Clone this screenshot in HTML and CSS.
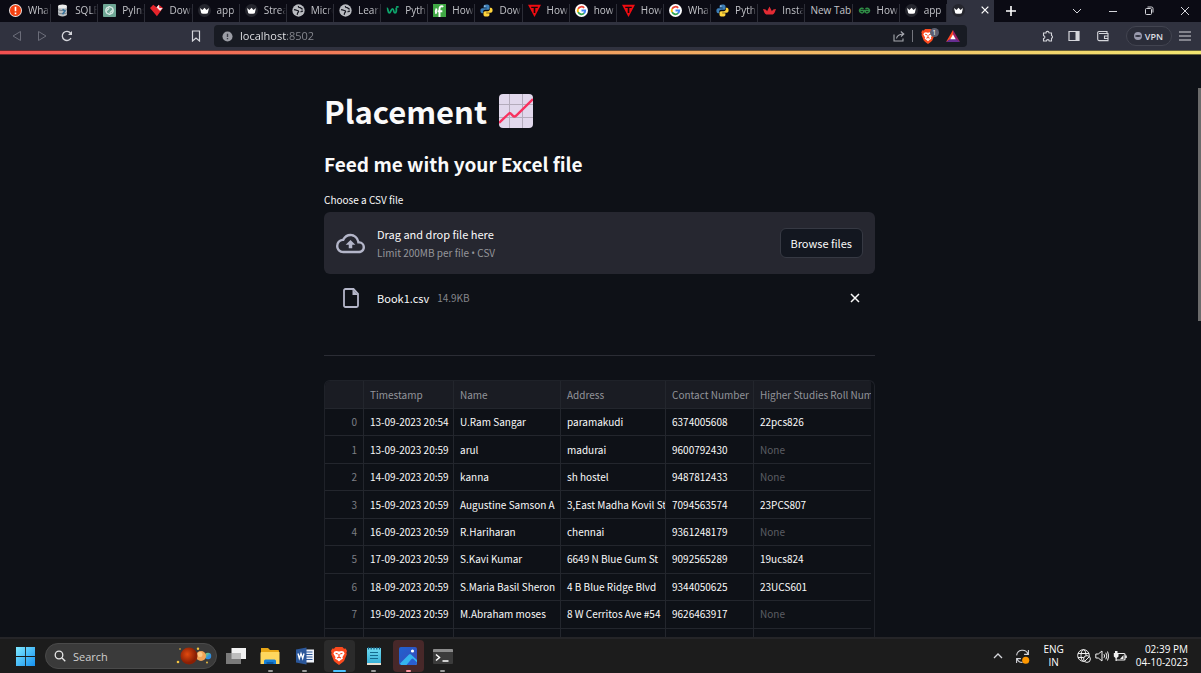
FILE: index.html
```html
<!DOCTYPE html>
<html lang="en">
<head>
<meta charset="utf-8">
<meta name="viewport" content="width=device-width, initial-scale=1">
<title>app</title>
<link rel="stylesheet" href="styles.css">
</head>
<body>
<svg class="defs" aria-hidden="true">
  <defs>
    <linearGradient id="win" x1="0" y1="0" x2="1" y2="1"><stop offset="0" stop-color="#7fe9ff"/><stop offset="1" stop-color="#1590f0"/></linearGradient>
    <linearGradient id="photo" x1="0" y1="0" x2="1" y2="1"><stop offset="0" stop-color="#1f62d0"/><stop offset="1" stop-color="#3b49b8"/></linearGradient>
    <linearGradient id="note" x1="0" y1="0" x2="0" y2="1"><stop offset="0" stop-color="#6fdcf2"/><stop offset="1" stop-color="#35aed6"/></linearGradient>
    <radialGradient id="mars" cx=".4" cy=".4"><stop offset="0" stop-color="#e04a10"/><stop offset="1" stop-color="#8a1f04"/></radialGradient>
    <linearGradient id="earth" x1="0" y1="0" x2="1" y2="1"><stop offset="0" stop-color="#8be05a"/><stop offset=".6" stop-color="#2f8ee0"/></linearGradient>
  </defs>
  <symbol id="i-crown" viewBox="0 0 16 16"><circle cx="8" cy="8" r="8" fill="#25262e"/><path d="M2.500 5 5.500 7.500 8 4.500 10.500 7.500 13.500 5 12 11.300 Q8 12.600 4 11.300Z" fill="#fff"/></symbol>
  <symbol id="i-globe" viewBox="0 0 16 16"><circle cx="8" cy="8" r="7.600" fill="#b9bbc0"/><path d="M2.500 6.800c3 .2 3 1.200 4.500 1.400 1.500.4 1.500 1.500.4 2.200-1 .8-.7 1.800-1 3M8 2.500c-.5 1.500.6 2 2 2 1.200.1 1.200 1.400 3.200 1.700M13.500 9c-1.500-.5-2.500 0-2.500 1" fill="none" stroke="#15161f" stroke-width="1.500"/></symbol>
  <symbol id="i-google" viewBox="0 0 16 16"><circle cx="8" cy="8" r="8" fill="#fff"/><g fill="none" stroke-width="2.200"><path d="M11.300 4.700A4.600 4.600 0 0 0 3.900 6" stroke="#ea4335"/><path d="M3.900 5.900a4.600 4.600 0 0 0 0 4.200" stroke="#fbbc05"/><path d="M3.900 10.100a4.600 4.600 0 0 0 7.400 1.200" stroke="#34a853"/><path d="M8 8h4.600a4.600 4.600 0 0 1-1.500 3.500" stroke="#4285f4"/></g></symbol>
  <symbol id="i-python" viewBox="0 0 16 16"><path d="M8 .5c-3 0-3.600 1-3.600 2.300V4.500h4v.8H2.800C1.200 5.300.5 6.600.5 8.300s.8 3 2 3h1.400V9.400c0-1.200 1-2.200 2.300-2.200h3.600c1 0 1.900-.9 1.900-1.900V2.800C11.700 1.300 10.500.5 8 .5Z" fill="#3d7fb8"/><path d="M8 15.500c3 0 3.600-1 3.600-2.300v-1.700h-4v-.8h5.600c1.600 0 2.300-1.300 2.300-3s-.8-3-2-3h-1.400v1.900c0 1.200-1 2.200-2.300 2.200H6.200c-1 0-1.900.9-1.900 1.900v2.500c0 1.500 1.200 2.300 3.700 2.300Z" fill="#ffd43b"/><circle cx="6" cy="2.500" r=".8" fill="#fff"/></symbol>
  <symbol id="i-t" viewBox="0 0 16 16"><path d="M0 1h16L8 16Z" fill="#f00c12"/><path d="M4 3.300h8v1.700H9v6H7v-6H4Z" fill="#170609"/></symbol>
  <symbol id="i-brave" viewBox="0 0 16 18"><path d="M4.500 0h7l1.500 1.700 1.700-.1L16 4l-.6 1.800.4 1.500-2.500 6.200c-.5 1.200-3 2.800-5.300 4.500-2.300-1.700-4.800-3.300-5.300-4.500L.2 7.300l.4-1.500L0 4l1.300-2.400 1.700.1Z" fill="#fb4a1e"/><path d="M3.400 4.400 5.500 4l2.500.5L10.500 4l2.100.4 1 2.200-2.200 3.600.6 1.400-2.300 1.500L8 14.600l-1.700-1.500L4 11.600l.6-1.400-2.200-3.600Z" fill="#fff"/><path d="M4.600 6.300 6.800 7M11.400 6.300 9.200 7M8 7v3.600M6 11l2-.8 2 .8" stroke="#fb4a1e" stroke-width="1.200" fill="none"/></symbol>
  <symbol id="i-x" viewBox="0 0 12 12"><path d="M2 2l8 8M10 2l-8 8" stroke="currentColor" stroke-width="1.500" fill="none"/></symbol>
</svg>

<header class="browser">
  <div class="tabstrip">
    <div class="tabs" role="tablist">
      <button class="tab" role="tab"><svg class="fav" viewBox="0 0 16 16"><circle cx="8" cy="8" r="8" fill="#f2e9e6"/><circle cx="8" cy="8" r="6.800" fill="#f4400f"/><path d="M8 3.500v5.300M8 10.500v2" stroke="#fff" stroke-width="2"/></svg><span class="tab-text">What</span></button>
      <button class="tab" role="tab"><svg class="fav" viewBox="0 0 16 16"><path d="M2.500 3v10c0 3 11 3 11 0V3" fill="#bcc1c4"/><ellipse cx="8" cy="3" rx="5.500" ry="2.400" fill="#ecedec"/><path d="M2.500 6.500c1 2 10 2 11 0M2.500 10.500c1 2 10 2 11 0" stroke="#6b737a" fill="none"/><path d="m8 6.500 3 2-3 4" stroke="#38749d" stroke-width="2" fill="none"/></svg><span class="tab-text">SQLE</span></button>
      <button class="tab" role="tab"><svg class="fav" viewBox="0 0 16 16"><rect width="16" height="16" rx="1" fill="#6ea795"/><g fill="none" stroke="#e6f2ee" stroke-width="1"><circle cx="8" cy="8" r="4.800"/><path d="m8 3.200 4.200 2.400v4.800L8 12.800l-4.200-2.400V5.600ZM5 8l3-5M11 8l-3 5M8 5.500 3.800 9M8 10.500 12.200 7"/></g></svg><span class="tab-text">PyIns</span></button>
      <button class="tab" role="tab"><svg class="fav" viewBox="0 0 16 16"><path d="M0 5 4 1l4 3 3-3 5 4L8.500 15Z" fill="#e5242b"/><path d="m8 4 3-3 .5 4 4 0L12.500 8.500 10 6Z" fill="#f6e4e5"/></svg><span class="tab-text">Down</span></button>
      <button class="tab" role="tab"><svg class="fav"><use href="#i-crown"/></svg><span class="tab-text">app</span></button>
      <button class="tab" role="tab"><svg class="fav"><use href="#i-crown"/></svg><span class="tab-text">Strea</span></button>
      <button class="tab" role="tab"><svg class="fav"><use href="#i-globe"/></svg><span class="tab-text">Micro</span></button>
      <button class="tab" role="tab"><svg class="fav"><use href="#i-globe"/></svg><span class="tab-text">Learn</span></button>
      <button class="tab" role="tab"><svg class="fav" viewBox="0 0 16 16"><path d="M1 5c2 0 1 6 3 6s2-5 4-5 1 5 3 5 2-4 1.500-6.500M12.500 3.500h3" fill="none" stroke="#0ea56c" stroke-width="2.200"/></svg><span class="tab-text">Pyth</span></button>
      <button class="tab" role="tab"><svg class="fav" viewBox="0 0 16 16"><rect width="16" height="16" fill="#3fa744"/><path d="M8 16V6c0-3 3-4 4.500-2.500M5.500 9h6M4.500 5.500C3 8 3 10 4 12" fill="none" stroke="#fff" stroke-width="2.400"/></svg><span class="tab-text">How</span></button>
      <button class="tab" role="tab"><svg class="fav"><use href="#i-python"/></svg><span class="tab-text">Dow</span></button>
      <button class="tab" role="tab"><svg class="fav"><use href="#i-t"/></svg><span class="tab-text">How</span></button>
      <button class="tab" role="tab"><svg class="fav"><use href="#i-google"/></svg><span class="tab-text">how</span></button>
      <button class="tab" role="tab"><svg class="fav"><use href="#i-t"/></svg><span class="tab-text">How</span></button>
      <button class="tab" role="tab"><svg class="fav"><use href="#i-google"/></svg><span class="tab-text">What</span></button>
      <button class="tab" role="tab"><svg class="fav"><use href="#i-python"/></svg><span class="tab-text">Pyth</span></button>
      <button class="tab" role="tab"><svg class="fav" viewBox="0 0 16 16"><path d="M0 6c3 0 4 1 5 3L8 3l3 6c1-2 2-3 5-3-1 3-2 6-4 7H4C2 12 1 9 0 6Z" fill="#e22b34"/></svg><span class="tab-text">Insta</span></button>
      <button class="tab" role="tab"><span class="tab-text">New Tab</span></button>
      <button class="tab" role="tab"><svg class="fav" viewBox="0 0 16 16"><path d="M1 8h14M6.800 6a2.900 2.900 0 1 0 .2 4V8M9.200 6a2.900 2.900 0 1 1-.2 4V8" fill="none" stroke="#2f8d46" stroke-width="1.700"/></svg><span class="tab-text">How</span></button>
      <button class="tab" role="tab"><svg class="fav"><use href="#i-crown"/></svg><span class="tab-text">app</span></button>
      <button class="tab active" role="tab" aria-selected="true" aria-label="app"><svg class="fav"><use href="#i-crown"/></svg><svg class="tab-close"><use href="#i-x"/></svg></button>
    </div>
    <button class="icon-btn new-tab" aria-label="New tab"><svg viewBox="0 0 12 12"><path d="M6 1v10M1 6h10" stroke="#fff" stroke-width="1.600"/></svg></button>
    <div class="window-controls">
      <button class="icon-btn" aria-label="Tab search"><svg viewBox="0 0 12 12"><path d="m2 4 4 4 4-4" fill="none" stroke="currentColor"/></svg></button>
      <button class="icon-btn" aria-label="Minimize"><svg viewBox="0 0 12 12"><path d="M2 6.500h8" stroke="currentColor"/></svg></button>
      <button class="icon-btn" aria-label="Restore"><svg viewBox="0 0 12 12"><path d="M2.500 4.500a1 1 0 0 1 1-1h4a1 1 0 0 1 1 1v4a1 1 0 0 1-1 1h-4a1 1 0 0 1-1-1ZM4.500 2h4a1.500 1.500 0 0 1 1.500 1.500v4" fill="none" stroke="currentColor"/></svg></button>
      <button class="icon-btn" aria-label="Close"><svg viewBox="0 0 12 12"><path d="m2 2 8 8M10 2l-8 8" stroke="currentColor"/></svg></button>
    </div>
  </div>

  <div class="toolbar">
    <div class="nav">
      <button class="icon-btn dim" aria-label="Back"><svg viewBox="0 0 12 12"><path d="M9.500 1.500v9L2 6Z" fill="none" stroke="currentColor"/></svg></button>
      <button class="icon-btn dim" aria-label="Forward"><svg viewBox="0 0 12 12"><path d="M2.500 1.500v9L10 6Z" fill="none" stroke="currentColor"/></svg></button>
      <button class="icon-btn" aria-label="Reload"><svg viewBox="0 0 12 12"><path d="M10 8a4.600 4.600 0 1 1-.5-5" fill="none" stroke="currentColor" stroke-width="1.300"/><path d="M11 1v4H7Z" fill="currentColor"/></svg></button>
      <button class="icon-btn bookmark" aria-label="Bookmark"><svg viewBox="0 0 12 12"><path d="M2.500 1h7v10L6 8l-3.500 3Z" fill="none" stroke="currentColor" stroke-width="1.200"/></svg></button>
    </div>
    <div class="omnibox">
      <svg class="site-info" viewBox="0 0 12 12"><circle cx="6" cy="6" r="5.500" fill="#9b9da5"/><path d="M6 3v3.500M6 7.600V9" stroke="#3a3c46" stroke-width="1.500"/></svg>
      <input class="address" type="text" value="localhost:8502" aria-label="Address">
      <button class="icon-btn" aria-label="Share"><svg viewBox="0 0 12 12"><path d="M1 4.500V11h9V8.500M3.500 8.500c.5-3 2-4.200 6.500-4.500M7.800 1.500 10.800 4 8 6.500" fill="none" stroke="#a7a9b0" stroke-width="1.100"/></svg></button>
      <span class="divider"></span>
      <button class="icon-btn shield" aria-label="Brave Shields"><svg><use href="#i-brave"/></svg><span class="badge">1</span></button>
      <button class="icon-btn bat" aria-label="Rewards"><svg viewBox="0 0 14 12"><path d="M7 0 0 12l7-4Z" fill="#ff4724"/><path d="m7 0 7 12-7-4Z" fill="#9e1f63"/><path d="M0 12h14L7 7Z" fill="#662d91"/><path d="m7 4.500 2.700 4.700H4.300Z" fill="#fff"/></svg></button>
    </div>
    <div class="tools">
      <button class="icon-btn" aria-label="Extensions"><svg viewBox="0 0 12 12"><path d="M1.500 3H4a1.500 1.500 0 0 1 3-.2L9.500 3v2.500a1.500 1.500 0 0 1 0 2.800V11H7.200a1.400 1.400 0 0 0-2.800 0H1.500V8.500a1.400 1.400 0 0 0 0-2.800Z" fill="none" stroke="currentColor" stroke-width="1.100"/></svg></button>
      <button class="icon-btn" aria-label="Sidebar"><svg viewBox="0 0 12 12"><path d="M1 1.500h10v9H1Z" fill="none" stroke="currentColor" stroke-width="1.200"/><path d="M7.500 1.500H11v9H7.500Z" fill="currentColor"/></svg></button>
      <button class="icon-btn" aria-label="Wallet"><svg viewBox="0 0 12 12"><path d="M10 3.500v-2H2A1.300 1.300 0 0 0 .7 2.800v6.500A1.400 1.400 0 0 0 2 10.600h9V3.500H2M11 6H7.500v2.500H11" fill="none" stroke="currentColor" stroke-width="1.100"/></svg></button>
      <button class="vpn"><span class="vpn-dot"></span>VPN</button>
      <button class="icon-btn" aria-label="Menu"><svg viewBox="0 0 12 12"><path d="M0 2h12M0 6h12M0 10h12" stroke="currentColor" stroke-width="1.200"/></svg></button>
    </div>
  </div>
</header>

<main class="app">
  <div class="scroll-thumb"></div>
  <div class="content">
    <h1 class="title">Placement
      <svg class="chart" viewBox="0 0 34 34" role="img" aria-label="chart increasing"><rect width="34" height="34" rx="4" fill="#e1d8ec"/><path d="M10.500 0v34M23.500 0v34M0 10.500h34M0 23.500h34" stroke="#b4acbc" stroke-width="1"/><path d="m0 29 10-9.500c.8-.8 1.500-.4 2 .3l2 2c1 1 2 .8 3 0L34 5" fill="none" stroke="#f8315f" stroke-width="2.400"/></svg>
    </h1>
    <h2 class="subtitle">Feed me with your Excel file</h2>
    <label class="field-label" for="browse">Choose a CSV file</label>
    <section class="dropzone">
      <svg class="cloud" viewBox="0 0 24 24"><path d="M19.350 10.040A7.490 7.490 0 0 0 12 4C9.110 4 6.600 5.640 5.350 8.040A5.994 5.994 0 0 0 0 14c0 3.310 2.690 6 6 6h13c2.760 0 5-2.240 5-5 0-2.640-2.050-4.780-4.650-4.960ZM19 18H6c-2.210 0-4-1.790-4-4 0-2.050 1.530-3.760 3.560-3.970l1.070-.11.500-.95A5.469 5.469 0 0 1 12 6c2.620 0 4.880 1.860 5.390 4.430l.3 1.500 1.530.11A2.980 2.980 0 0 1 22 15c0 1.650-1.350 3-3 3ZM8 13h2.550v3h2.900v-3H16l-4-4Z" fill="currentColor"/></svg>
      <div class="drop-text">
        <span class="drop-main">Drag and drop file here</span>
        <small class="drop-hint">Limit 200MB per file <span class="bullet">•</span> CSV</small>
      </div>
      <button class="browse" id="browse">Browse files</button>
    </section>
    <div class="file">
      <svg class="file-icon" viewBox="0 0 16 20"><path d="M2.500 1h8L15 5.800v11.700A1.500 1.500 0 0 1 13.500 19h-11A1.500 1.500 0 0 1 1 17.500v-15A1.500 1.500 0 0 1 2.500 1Z" fill="none" stroke="currentColor" stroke-width="1.800"/><path d="M9.500 1v6H15" fill="currentColor"/></svg>
      <span class="file-name">Book1.csv</span>
      <small class="file-size">14.9KB</small>
      <button class="icon-btn remove" aria-label="Remove file"><svg><use href="#i-x"/></svg></button>
    </div>
    <hr class="rule">
    <div class="frame">
      <table class="grid">
        <colgroup><col class="c-index"><col class="c-time"><col class="c-name"><col class="c-address"><col class="c-phone"><col class="c-roll"></colgroup>
        <thead><tr><th></th><th>Timestamp</th><th>Name</th><th>Address</th><th>Contact Number</th><th>Higher Studies Roll Number</th></tr></thead>
        <tbody>
          <tr><td>0</td><td>13-09-2023 20:54</td><td>U.Ram Sangar</td><td>paramakudi</td><td>6374005608</td><td>22pcs826</td></tr>
          <tr><td>1</td><td>13-09-2023 20:59</td><td>arul</td><td>madurai</td><td>9600792430</td><td class="none">None</td></tr>
          <tr><td>2</td><td>14-09-2023 20:59</td><td>kanna</td><td>sh hostel</td><td>9487812433</td><td class="none">None</td></tr>
          <tr><td>3</td><td>15-09-2023 20:59</td><td>Augustine Samson A</td><td>3,East Madha Kovil St</td><td>7094563574</td><td>23PCS807</td></tr>
          <tr><td>4</td><td>16-09-2023 20:59</td><td>R.Hariharan</td><td>chennai</td><td>9361248179</td><td class="none">None</td></tr>
          <tr><td>5</td><td>17-09-2023 20:59</td><td>S.Kavi Kumar</td><td>6649 N Blue Gum St</td><td>9092565289</td><td>19ucs824</td></tr>
          <tr><td>6</td><td>18-09-2023 20:59</td><td>S.Maria Basil Sheron</td><td>4 B Blue Ridge Blvd</td><td>9344050625</td><td>23UCS601</td></tr>
          <tr><td>7</td><td>19-09-2023 20:59</td><td>M.Abraham moses</td><td>8 W Cerritos Ave #54</td><td>9626463917</td><td class="none">None</td></tr>
          <tr><td>&nbsp;</td><td>&nbsp;</td><td>&nbsp;</td><td>&nbsp;</td><td>&nbsp;</td><td>&nbsp;</td></tr>
        </tbody>
      </table>
    </div>
  </div>
</main>

<footer class="taskbar">
  <button class="icon-btn start" aria-label="Start"><svg viewBox="0 0 18 18"><path d="M0 0h8.600v8.600H0ZM9.400 0H18v8.600H9.400ZM0 9.400h8.600V18H0ZM9.400 9.400H18V18H9.400Z" fill="url(#win)"/></svg></button>
  <div class="search">
    <svg class="lens" viewBox="0 0 12 12"><circle cx="5" cy="5" r="3.800" fill="none" stroke="#e8e8e8" stroke-width="1.300"/><path d="m8 8 3.300 3.300" stroke="#e8e8e8" stroke-width="1.300"/></svg>
    <input class="search-input" type="text" placeholder="Search" aria-label="Search">
    <svg class="planets" viewBox="0 0 36 18"><circle cx="32" cy="9" r="3.200" fill="url(#earth)"/><circle cx="25" cy="9" r="5" fill="#f2a356"/><circle cx="24" cy="7.500" r="2.500" fill="#f9c987"/><circle cx="13" cy="9" r="8.500" fill="url(#mars)"/><g fill="#f5c542"><circle cx="22" cy="1.800" r="1.200"/><circle cx="2" cy="15" r="1.300"/><circle cx="4" cy="2" r=".8"/><circle cx="31" cy="15.500" r=".9"/></g></svg>
  </div>
  <div class="apps">
    <button class="tile" aria-label="Task view"><svg viewBox="0 0 20 18"><path d="M5.500 1H20v11H5.500Z" fill="#f2f2f2"/><path d="M0 6h15v11H0Z" fill="#7a7a7a"/><path d="M5.500 6H15v6H5.500Z" fill="#bdbdbd"/></svg></button>
    <button class="tile running" aria-label="File Explorer"><svg viewBox="0 0 20 18"><path d="M1 1h7l2 2h8a1 1 0 0 1 1 1v4H1Z" fill="#e8a616"/><path d="M1 5h18.500v12H.5V6Z" fill="#ffd75e"/><path d="M4 17v-3a1.500 1.500 0 0 1 1.500-1.500h9A1.500 1.500 0 0 1 16 14v3Z" fill="#1881d8"/><path d="M6.500 15h7v2h-7Z" fill="#0b5ba8"/></svg></button>
    <button class="tile running" aria-label="Word"><svg viewBox="0 0 20 18"><path d="M9 2.500h10v13H9Z" fill="#eef2fa"/><path d="M11 5h6.500M11 7.500h6.500M11 10h6.500M11 12.500h6.500" stroke="#2b579a"/><path d="M1 2.500 11.500.500v17L1 15.500Z" fill="#2b579a"/><path d="m3 6.500 1.300 5 1.700-5 1.700 5 1.300-5" fill="none" stroke="#fff" stroke-width="1.300"/></svg></button>
    <button class="tile running current" aria-label="Brave"><svg><use href="#i-brave"/></svg></button>
    <button class="tile running" aria-label="Notepad"><svg viewBox="0 0 20 18"><path d="M3 1h14v16H3Z" fill="url(#note)"/><path d="M3 16h14v2H3Z" fill="#e9dfcf"/><path d="M4.500 0v2.500M7.200 0v2.500M10 0v2.500M12.800 0v2.500M15.500 0v2.500" stroke="#13577a" stroke-width="1.200"/><path d="M6 5.500h8M6 8.500h8M6 11.500h8" stroke="#146c8f" stroke-width="1.200"/></svg></button>
    <button class="tile running alert" aria-label="Photos"><svg viewBox="0 0 20 18"><rect x="1" y="0" width="18" height="18" rx="2" fill="url(#photo)"/><path d="m2 16.500 9-9a1.500 1.500 0 0 1 2 0L19 13v3a2 2 0 0 1-2 2H3Z" fill="#35b4ee"/><path d="m8.500 18 5-6a1.500 1.500 0 0 1 2 0L19 15.500v.5a2 2 0 0 1-2 2Z" fill="#2a5fd0"/><circle cx="14.500" cy="4" r="1.600" fill="#fff"/></svg></button>
    <button class="tile running" aria-label="Terminal"><svg viewBox="0 0 20 18"><rect x="0" y="2" width="20" height="15" rx="1" fill="#3b3b3b"/><path d="M0 5V3a1 1 0 0 1 1-1h18a1 1 0 0 1 1 1v2Z" fill="#8c8c8c"/><path d="m3 7.500 3.500 3L3 13.500M9.500 14h6" fill="none" stroke="#fff" stroke-width="1.500"/></svg></button>
  </div>
  <div class="tray">
    <button class="icon-btn" aria-label="Hidden icons"><svg viewBox="0 0 12 12"><path d="m2 8 4-4 4 4" fill="none" stroke="currentColor" stroke-width="1.300"/></svg></button>
    <button class="icon-btn update" aria-label="Update"><svg viewBox="0 0 14 14"><path d="M1.500 6A5.500 5.500 0 0 1 12 4.500M12.500 1v4h-4M1.500 13V9h4M2 9.500A5.500 5.500 0 0 0 7 12.500" fill="none" stroke="currentColor"/><circle cx="10" cy="10.500" r="3.300" fill="#ff9800"/></svg></button>
    <div class="stack lang"><span>ENG</span><span>IN</span></div>
    <div class="status">
      <svg viewBox="0 0 14 14"><g fill="none" stroke="currentColor" stroke-width="1"><circle cx="6.500" cy="6.500" r="5.800"/><ellipse cx="6.500" cy="6.500" rx="2.500" ry="5.800"/><path d="M1 4.500h11M1 8.500h6"/></g><circle cx="10" cy="10" r="3.400" fill="#1c1c1c" stroke="currentColor"/><path d="m7.800 12.200 4.400-4.400" stroke="currentColor"/></svg>
      <svg viewBox="0 0 14 14"><path d="M.8 5v4h2.500L7 12V2L3.300 5ZM9 5.200q1.200 1.800 0 3.600M10.800 3.700q2.200 3.300 0 6.600M12.500 2.500q2.500 4.500 0 9" fill="none" stroke="currentColor"/></svg>
      <svg viewBox="0 0 14 14"><path d="M2 4.500h9a1 1 0 0 1 1 1V10a1 1 0 0 1-1 1H3.500" fill="none" stroke="currentColor" stroke-width="1.200"/><path d="M13 6.500v2.500" stroke="currentColor" stroke-width="1.600"/><path d="M2 2v2H.8v3.500L2.500 9v3h1.300V9l1.700-1.500V4H4.500V2M7 10l3.500-4v4Z" fill="currentColor"/></svg>
    </div>
    <div class="stack clock"><time>02:39 PM</time><time>04-10-2023</time></div>
  </div>
</footer>
</body>
</html>
```
FILE: styles.css
```css
* { box-sizing: border-box; }

body {
  margin: 0;
  height: 100vh;
  display: flex;
  flex-direction: column;
  overflow: hidden;
  background: #0e1117;
  color: #fafafa;
  font-family: "Noto Sans CJK SC", "Noto Sans", sans-serif;
}

button, input {
  margin: 0;
  padding: 0;
  border: 0;
  background: none;
  color: inherit;
  font: inherit;
}

svg { display: block; flex: none; }
.defs { position: absolute; width: 0; height: 0; }

.icon-btn {
  display: flex;
  align-items: center;
  justify-content: center;
  flex: none;
  width: 12px;
  height: 12px;
  color: #d5d6db;
}
.icon-btn svg { width: 100%; height: 100%; }

/* Browser chrome */
.browser {
  flex: none;
  font-family: "Open Sans", "Noto Sans", sans-serif;
  background: #30323f;
}
.browser::after {
  content: "";
  display: block;
  height: 3px;
  border: solid rgba(14, 17, 23, .6);
  border-width: 1px 0;
  background: linear-gradient(90deg, #f25050, #f0a060 50%, #f2e670) border-box;
}

.tabstrip {
  display: flex;
  align-items: center;
  height: 22px;
  padding: 0 10px 0 4px;
  background: #0b0b14;
}
.tabs { display: flex; flex: 0 1 990px; min-width: 0; height: 100%; }
.tab {
  position: relative;
  display: flex;
  align-items: center;
  gap: 6px;
  flex: 1 1 10px;
  min-width: 0;
  padding: 0 1px 2px 5px;
  font-size: 10px;
  line-height: 16px;
  color: #c3c4c9;
}
.tab:not(.active)::after {
  content: "";
  position: absolute;
  right: 0;
  top: 4px;
  bottom: 0;
  width: 1px;
  background: #2b2c36;
}
.fav { width: 13px; height: 13px; }
.tab-text {
  flex: 1;
  min-width: 0;
  overflow: hidden;
  white-space: nowrap;
  text-align: left;
  mask-image: linear-gradient(90deg, #000 70%, transparent);
}
.tab-text:first-child { mask-image: none; }
.tab.active { justify-content: space-between; padding-right: 4px; background: #30323f; color: #fff; }
.tab-close { width: 10px; height: 10px; }
.new-tab { margin-left: 11px; }
.window-controls { display: flex; gap: 24px; margin-left: auto; }

.toolbar { display: flex; align-items: center; height: 28px; padding: 0 10px; }
.nav { display: flex; align-items: center; gap: 13px; width: 204px; padding: 0 12px 0 1px; }
.dim { color: #6b6d79; }
.bookmark { margin-left: auto; }
.omnibox {
  display: flex;
  align-items: center;
  gap: 7px;
  flex: 1;
  height: 22px;
  padding: 0 7px 0 8px;
  border-radius: 4px;
  background: #181b23;
}
.site-info { width: 11px; height: 11px; }
.address {
  flex: 1;
  min-width: 0;
  font-size: 11px;
  line-height: 16px;
  color: transparent;
  background: linear-gradient(90deg, #eeeff2 46px, #8a8c93 46px) text;
}
.divider { width: 1px; height: 12px; background: #74767e; }
.shield { position: relative; width: 14px; height: 15px; margin-left: 1px; }
.badge {
  position: absolute;
  left: 9px;
  top: -1px;
  width: 9px;
  height: 9px;
  border-radius: 5px;
  background: #5d6070;
  color: #fff;
  font-size: 7px;
  line-height: 9px;
  text-align: center;
}
.bat { width: 14px; margin-left: 4px; }
.tools { display: flex; align-items: center; gap: 17px; margin-left: 75px; }
.tools > :first-child { margin-right: -3px; }
.vpn {
  display: flex;
  align-items: center;
  gap: 3px;
  height: 20px;
  margin-right: -10px;
  padding: 0 8px 0 7px;
  border: 1px solid #424450;
  border-radius: 10px;
  background: #2b2d39;
  font-size: 9px;
  font-weight: 600;
  color: #dddee2;
}
.vpn-dot { width: 8px; height: 8px; border: solid #9a9bae; border-width: 3px 1px; border-radius: 4px; background: #30323f; }

/* Page */
.app { position: relative; flex: 1; min-height: 0; overflow: hidden; padding: 33px 12px 0 10px; }
.scroll-thumb { position: absolute; right: 0; top: 33px; width: 3px; height: 233px; background: #6b6b6b; }
.content { max-width: 551px; margin: 0 auto; }

.title {
  display: flex;
  align-items: center;
  gap: 12px;
  margin: 0;
  font-size: 31px;
  font-weight: 700;
  line-height: 46px;
}
.chart { width: 34px; height: 34px; }
.subtitle { margin: 16px 0 0; font-size: 19px; font-weight: 700; line-height: 28px; }
.field-label { display: block; margin: 13px 0 4px; font-size: 10px; line-height: 17px; }

.dropzone {
  display: flex;
  align-items: center;
  gap: 12px;
  padding: 12px;
  border-radius: 6px;
  background: #262730;
}
.cloud { width: 29px; height: 29px; color: #b4b6c9; }
.drop-text { display: flex; flex-direction: column; flex: 1; }
.drop-main { font-size: 11px; line-height: 20px; }
.drop-hint { font-size: 10px; line-height: 18px; color: #95969b; }
.bullet { font-family: "Open Sans", sans-serif; line-height: 1; }
.browse {
  height: 30px;
  padding: 0 10px;
  border: 1px solid #363943;
  border-radius: 6px;
  background: #131720;
  font-size: 11px;
}

.file { display: flex; align-items: center; height: 24px; margin-top: 12px; padding: 0 14px 0 19px; }
.file-icon { width: 16px; height: 20px; margin-right: 18px; color: #b4b6c9; }
.file-name { font-size: 11px; line-height: 16px; }
.file-size { margin-left: 8px; font-size: 10px; line-height: 16px; color: #85868b; }
.remove { margin-left: auto; color: #fafafa; }

.rule { height: 1px; margin: 45px 0 24px; border: 0; background: #2b2d35; }

.frame { padding-right: 3px; border: 1px solid #1f2229; border-bottom: 0; border-radius: 6px 6px 0 0; overflow: hidden; }
.grid {
  width: 100%;
  height: 275px;
  table-layout: fixed;
  border-collapse: separate;
  border-spacing: 0;
  font-size: 10px;
  line-height: 16px;
}
.c-index { width: 39px; }
.c-time { width: 90px; }
.c-name { width: 107px; }
.c-address { width: 105px; }
.c-phone { width: 88px; }
.grid th, .grid td {
  padding: 0 0 0 6px;
  border: solid #23262d;
  border-width: 0 1px 1px 0;
  overflow: hidden;
  white-space: nowrap;
  text-align: left;
  font-weight: 400;
}
.grid th { height: 28px; background: #1a1c23; color: #92949a; }
.grid th:last-child, .grid td:last-child { border-right: 0; }
.grid td:first-child { padding-right: 6px; text-align: right; color: #7c7e84; }
.grid .none { color: #5c5e64; }

/* Taskbar */
.taskbar {
  flex: none;
  display: flex;
  align-items: center;
  height: 36px;
  padding: 0 13px 0 16px;
  border-top: 2px solid #252528;
  background: #1c1c1c;
  font-family: "Open Sans", "Noto Sans", sans-serif;
}
.start { width: 19px; height: 19px; }
.search {
  display: flex;
  align-items: center;
  gap: 7px;
  width: 172px;
  height: 26px;
  margin-left: 10px;
  padding: 0 4px 0 8px;
  border: 1px solid #4a4a4a;
  border-radius: 13px;
  background: #3a3a3a;
}
.lens { width: 12px; height: 12px; }
.search-input { flex: 1; min-width: 0; font-size: 11px; }
.search-input::placeholder { color: #cfcfcf; opacity: 1; }
.planets { width: 36px; height: 18px; }
.apps { display: flex; justify-content: space-between; width: 238px; height: 32px; margin-left: 3px; }
.tile {
  position: relative;
  display: flex;
  align-items: center;
  justify-content: center;
  width: 31px;
  height: 32px;
  border-radius: 4px;
}
.tile svg { width: 20px; height: 18px; }
.running::after {
  content: "";
  position: absolute;
  left: 13px;
  right: 13px;
  bottom: 0;
  height: 2px;
  border-radius: 1px;
  background: #9a9a9a;
}
.current { background: #2b2b2b; }
.current::after { left: 9px; right: 9px; background: #4cc2ff; }
.alert { background: #472829; }
.alert::after { background: #ff99a4; }
.tray { display: flex; align-items: center; margin-left: auto; color: #f0f0f0; }
.update { width: 15px; height: 15px; margin-left: 11px; }
.stack { display: flex; flex-direction: column; font-size: 10px; line-height: 13px; color: #fff; }
.lang { margin-left: 13px; align-items: center; }
.status { display: flex; gap: 4px; margin: 0 9px 0 13px; }
.status svg { width: 14px; height: 14px; }
.clock { align-items: flex-end; }
```
